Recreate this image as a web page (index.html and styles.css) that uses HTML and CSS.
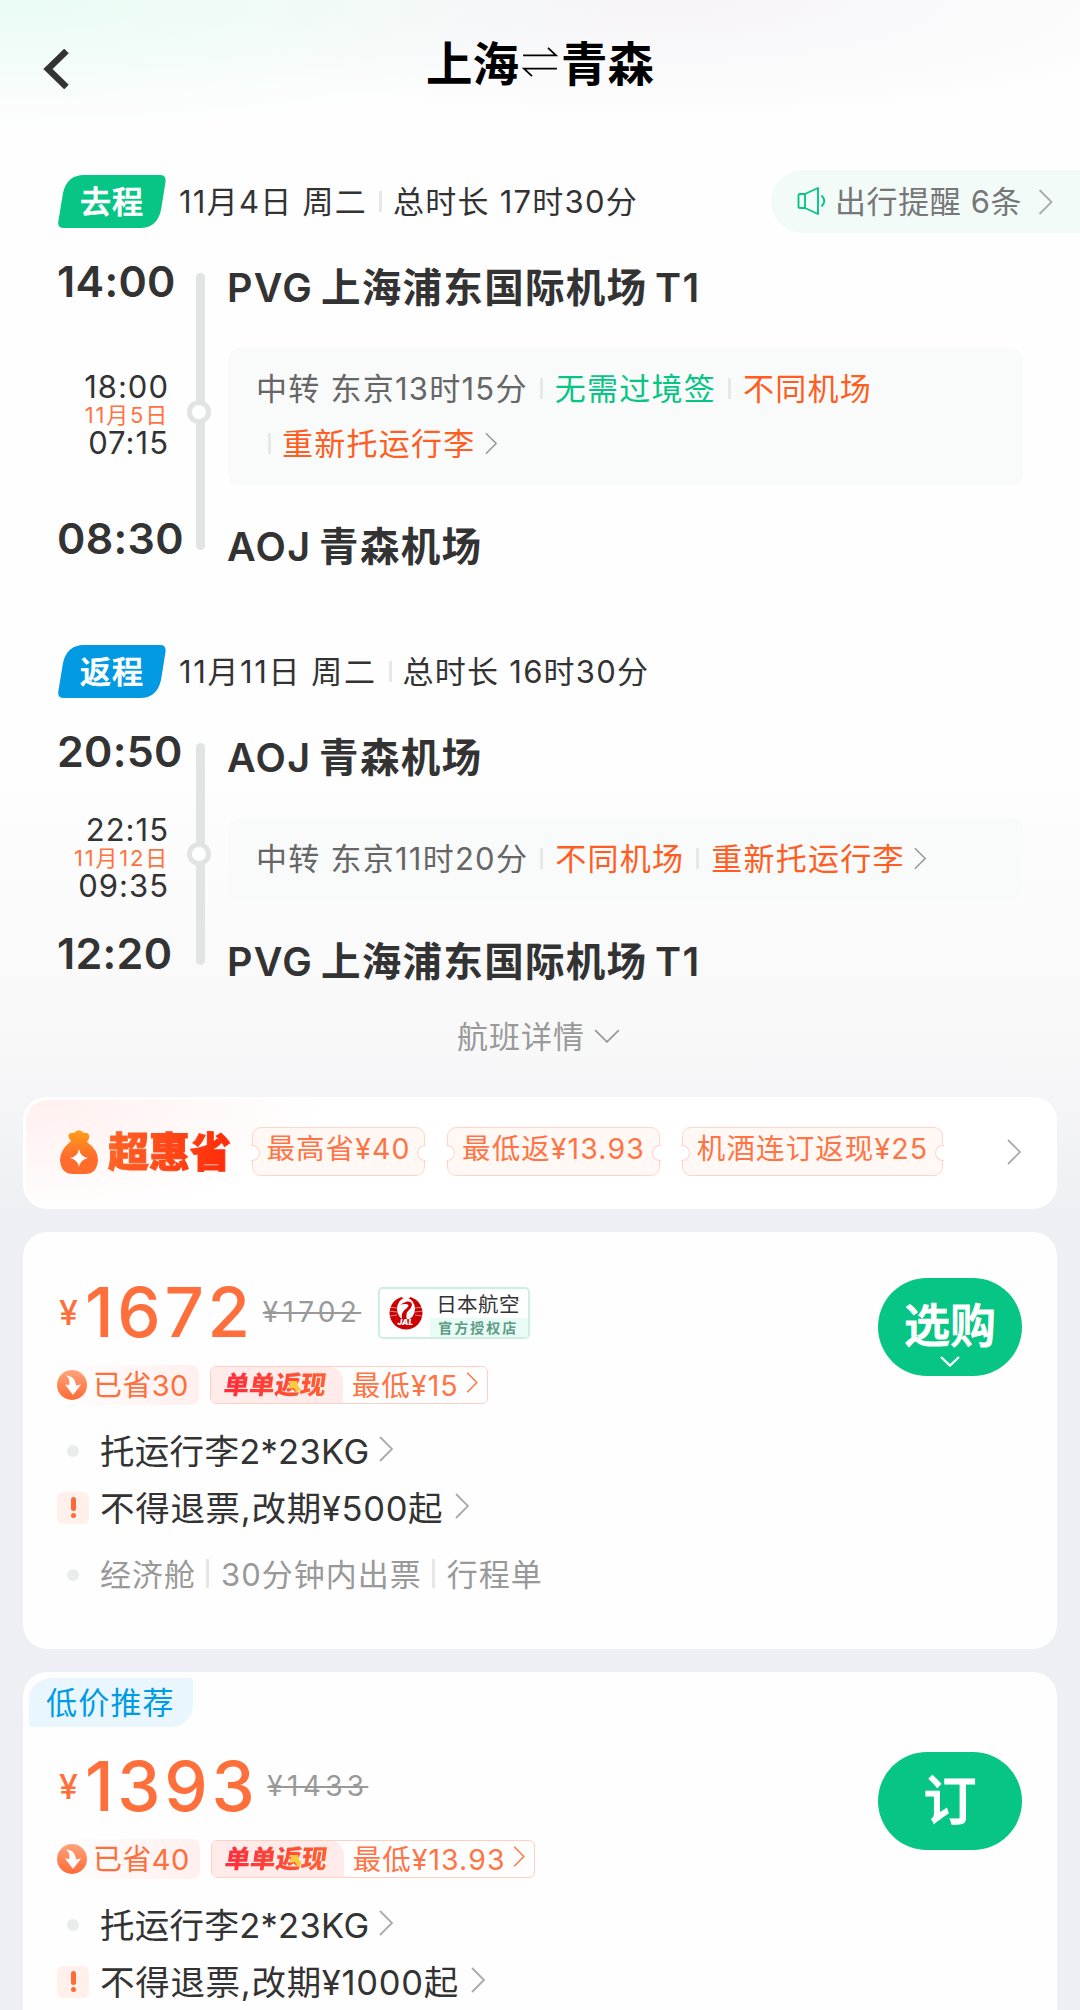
FILE: index.html
```
<!DOCTYPE html>
<html lang="zh-CN">
<head>
  <meta charset="UTF-8" />
  <title>上海⇌青森</title>
  <link rel="stylesheet" href="styles.css">
</head>
<body>
  <!-- ícones reutilizados -->
  <svg class="sprite" width="0" height="0">
    <defs>
      <linearGradient id="bag-fill" x1="0" y1="0" x2="0" y2="1">
        <stop offset="0" stop-color="#ff9f17" />
        <stop offset="0.6" stop-color="#ff6c2c" />
        <stop offset="1" stop-color="#ff6c2c" />
      </linearGradient>
      <linearGradient id="save-fill" x1="0" y1="0" x2="0" y2="1">
        <stop offset="0" stop-color="#ffa47c" />
        <stop offset="1" stop-color="#ff6a35" />
      </linearGradient>
    </defs>
    <symbol id="chevron" viewBox="0 0 14 26">
      <path d="M1 1 L13 13 L1 25" fill="none" stroke="currentColor" stroke-width="1.8" />
    </symbol>
    <symbol id="save" viewBox="0 0 30 30">
      <circle cx="15" cy="15" r="15" fill="url(#save-fill)" />
      <path d="M9 5.5 C13 9 12.500 11 12.200 15 L8 14.5 L16 25 L24 14.5 L19 15.500 C18.500 9 14.5 5.5 9 5.5 Z" fill="#fff" />
    </symbol>
  </svg>

  <header class="topbar">
    <svg class="back" viewBox="0 0 26 40"><path d="M23.5 2 L5 20 L23.5 38" fill="none" stroke="#333" stroke-width="6.5" /></svg>
    <h1 class="title">上海<svg class="swap" viewBox="0 0 40 36"><path d="M1 10.500 H38 L29 2 M39 25.500 H2 L11 34" fill="none" stroke="#000" stroke-width="2" /></svg>青森</h1>
  </header>

  <section class="leg">
    <div class="leg-head">
      <span class="leg-tag"><svg viewBox="0 0 108 53"><path d="M26 0 H102 Q108.500 0 107.500 7 L103 35 Q99 53 82 53 H6 Q-1 53 .4 46 L5 18 Q9 0 26 0 Z" fill="#07c585" /></svg><b>去程</b></span>
      <span class="leg-date">11月4日 周二</span>
      <i class="sep"></i>
      <span class="leg-total">总时长 17时30分</span>
      <a class="notice">
        <svg class="horn" viewBox="0 0 28 28"><path d="M7.500 7 V21 M1 8.500 Q1 7 2.500 7 H7.500 L20.500 1 V27 L7.500 21 H2.500 Q1 21 1 19.500 Z M24 8.500 Q29.500 14 24 19.500" fill="none" stroke="#07c585" stroke-width="1.900" stroke-linejoin="round" /></svg>
        <span>出行提醒 6条</span>
        <svg class="chev"><use href="#chevron" /></svg>
      </a>
    </div>
    <div class="route route-tall">
      <div class="axis"></div>
      <div class="stop"></div>
      <div class="time">14:00</div>
      <div class="airport">PVG 上海浦东国际机场 T1</div>
      <div class="mid-time"><span>18:00</span><em>11月5日</em><span>07:15</span></div>
      <div class="transit">
        <div class="transit-line">
          <span>中转 东京13时15分</span><i class="sep"></i>
          <span class="green">无需过境签</span><i class="sep"></i>
          <span class="orange">不同机场</span>
        </div>
        <div class="transit-line second">
          <i class="sep"></i><span class="orange">重新托运行李</span>
          <svg class="chev small"><use href="#chevron" /></svg>
        </div>
      </div>
      <div class="time last">08:30</div>
      <div class="airport last">AOJ 青森机场</div>
    </div>
  </section>

  <section class="leg leg-back">
    <div class="leg-head">
      <span class="leg-tag"><svg viewBox="0 0 108 53"><path d="M26 0 H102 Q108.500 0 107.500 7 L103 35 Q99 53 82 53 H6 Q-1 53 .4 46 L5 18 Q9 0 26 0 Z" fill="#019ae3" /></svg><b>返程</b></span>
      <span class="leg-date">11月11日 周二</span>
      <i class="sep"></i>
      <span class="leg-total">总时长 16时30分</span>
    </div>
    <div class="route route-short">
      <div class="axis"></div>
      <div class="stop"></div>
      <div class="time">20:50</div>
      <div class="airport">AOJ 青森机场</div>
      <div class="mid-time"><span>22:15</span><em>11月12日</em><span>09:35</span></div>
      <div class="transit">
        <div class="transit-line">
          <span>中转 东京11时20分</span><i class="sep"></i>
          <span class="orange">不同机场</span><i class="sep"></i>
          <span class="orange">重新托运行李</span>
          <svg class="chev small"><use href="#chevron" /></svg>
        </div>
      </div>
      <div class="time last">12:20</div>
      <div class="airport last">PVG 上海浦东国际机场 T1</div>
    </div>
  </section>

  <div class="details"><span>航班详情</span><svg viewBox="0 0 24 13"><path d="M1 1 L12 12 L23 1" fill="none" stroke="#999" stroke-width="1.600" /></svg></div>

  <section class="promo">
    <svg class="bag" viewBox="0 0 38 44">
      <path d="M11 11 Q7 7 9 4 Q11 2 14 3 Q19 -2.500 24 3 Q28 2 29 5 Q30 8 27 12 Q38 20 38 30 Q37 44 25 44 H13 Q1 44 0 30 Q0 20 11 11 Z" fill="url(#bag-fill)" />
      <path d="M19 19 Q20.500 27 28 28 Q20.500 29.500 19 37 Q17.500 29.500 10 28 Q17.500 27 19 19 Z" fill="#fff" />
    </svg>
    <b class="promo-name">超惠省</b>
    <span class="coupon c1">最高省¥40</span>
    <span class="coupon c2">最低返¥13.93</span>
    <span class="coupon c3">机酒连订返现¥25</span>
    <svg class="chev"><use href="#chevron" /></svg>
  </section>

  <section class="fare">
    <div class="fare-main">
      <div class="price-row">
        <span class="yen">¥</span><span class="price">1672</span><s class="old">¥1702</s>
        <div class="store">
          <svg class="jal" viewBox="0 0 34 34">
            <circle cx="17" cy="17" r="16.500" fill="#cb0000" />
            <ellipse cx="17" cy="13" rx="9" ry="11" fill="#fff" />
            <path d="M12 0 H22 L20 2.500 H14 Z" fill="#fff" />
            <path d="M11 8.500 L18 5.500 Q23 5 23 9 Q22.500 12 19.500 14.500 Q16 18 18 23 L23 25 H11 L13 22 Q12 17 15.500 14 Q20 10.500 19.500 9 Q18.500 7.500 11 8.500 Z" fill="#cb0000" />
            <path d="M0 11 L8 12 M0 15 L8 16 M1 20 L8 19 M34 11 L26 12 M34 15 L26 16 M33 20 L26 19" stroke="#fff" stroke-width=".5" />
            <text x="8.500" y="29" class="jal-text">JAL</text>
          </svg>
          <div class="store-text"><span>日本航空</span><small>官方授权店</small></div>
        </div>
      </div>
      <div class="tag-row">
        <span class="saved"><svg><use href="#save" /></svg><span>已省30</span></span>
        <span class="cashback"><b><i>单单返现</i><svg viewBox="0 0 12 12"><path d="M1 0 L8 0 L9 5 L12 8 L8 12 L5 7 L0 8 Z" fill="#ffc93c" /></svg></b><span>最低¥15</span><svg class="chev"><use href="#chevron" /></svg></span>
      </div>
      <ul class="rules">
        <li class="bag-rule"><i class="dot"></i><span>托运行李2*23KG</span><svg class="chev"><use href="#chevron" /></svg></li>
        <li><i class="warn"></i><span>不得退票,改期¥500起</span><svg class="chev"><use href="#chevron" /></svg></li>
        <li class="muted"><i class="dot"></i><span>经济舱</span><i class="sep"></i><span>30分钟内出票</span><i class="sep"></i><span>行程单</span></li>
      </ul>
    </div>
    <button class="buy">选购<svg viewBox="0 0 20 11"><path d="M1 1 L10 9.500 L19 1" fill="none" stroke="#fff" stroke-width="2.300" /></svg></button>
  </section>

  <section class="fare fare-low">
    <span class="ribbon">低价推荐</span>
    <div class="fare-main">
      <div class="price-row">
        <span class="yen">¥</span><span class="price">1393</span><s class="old">¥1433</s>
      </div>
      <div class="tag-row">
        <span class="saved"><svg><use href="#save" /></svg><span>已省40</span></span>
        <span class="cashback"><b><i>单单返现</i><svg viewBox="0 0 12 12"><path d="M1 0 L8 0 L9 5 L12 8 L8 12 L5 7 L0 8 Z" fill="#ffc93c" /></svg></b><span>最低¥13.93</span><svg class="chev"><use href="#chevron" /></svg></span>
      </div>
      <ul class="rules">
        <li class="bag-rule"><i class="dot"></i><span>托运行李2*23KG</span><svg class="chev"><use href="#chevron" /></svg></li>
        <li><i class="warn"></i><span>不得退票,改期¥1000起</span><svg class="chev"><use href="#chevron" /></svg></li>
      </ul>
    </div>
    <button class="buy single">订</button>
  </section>
</body>
</html>
```
FILE: styles.css
```
* {
  box-sizing: border-box;
}

body {
  margin: 0;
  width: 1080px;
  height: 2010px;
  overflow: hidden;
  font-family: Inter, "Noto Sans CJK SC", sans-serif;
  font-size: 31px;
  color: #333;
  white-space: nowrap;
  background:
    radial-gradient(ellipse 620px 130px at 0 0, #e9fbf4, rgba(255, 255, 255, 0)),
    radial-gradient(ellipse 560px 120px at 660px 0, #f6f4f7, rgba(255, 255, 255, 0)),
    linear-gradient(#fefefe 760px, #f8f8f9 1050px, #eeeff4 1220px);
}

i, em {
  font-style: normal;
}

svg {
  flex: none;
  display: block;
}

.sprite {
  position: absolute;
}

.chev {
  width: 14px;
  height: 26px;
  color: #aaa;
}

.chev.small {
  width: 12px;
  height: 23px;
  color: #999;
}

.sep {
  width: 3px;
  height: 21px;
  background: #e6e8e7;
  flex: none;
}

/* topo */
.topbar {
  height: 175px;
  display: grid;
  grid-template-columns: 43px 26px 1fr 69px;
  align-items: start;
}

.back {
  grid-column: 2;
  width: 26px;
  height: 40px;
  margin-top: 49px;
}

.title {
  margin: 27px 0 0;
  height: 66px;
  display: flex;
  justify-content: center;
  align-items: center;
  font-size: 46.500px;
  font-weight: 600;
  color: #000;
}

.swap {
  width: 40px;
  height: 32px;
  margin: 4px 1px 0;
}

/* trechos */
.leg-head {
  height: 53px;
  padding-left: 58px;
  display: flex;
  align-items: center;
}

.leg-back {
  margin-top: 60px;
}

.leg-tag {
  width: 108px;
  height: 53px;
  display: grid;
  place-items: center;
  margin-right: 13px;
}

.leg-tag svg, .leg-tag b {
  grid-area: 1 / 1;
}

.leg-tag svg {
  width: 108px;
  height: 53px;
}

.leg-tag b {
  padding-bottom: 4px;
  color: #fff;
  font-size: 31px;
  font-weight: 500;
  letter-spacing: 1px;
  -webkit-text-stroke: .7px #fff;
}

.leg-head > .sep {
  margin: 0 11px 0 12px;
}

.leg-date, .leg-total {
  padding-bottom: 4px;
  letter-spacing: 1.250px;
}

.leg-back .leg-date {
  letter-spacing: 1.600px;
}

.notice {
  margin-left: auto;
  width: 309px;
  height: 63px;
  padding: 0 27px 0 26px;
  border-radius: 32px 0 0 32px;
  background: #f3fbf9;
  display: flex;
  align-items: center;
  color: #777;
}

.notice span {
  padding-bottom: 4px;
  letter-spacing: .6px;
}

.notice .chev {
  margin-left: auto;
  width: 15px;
}

.horn {
  width: 29px;
  height: 28px;
  margin: 0 9px 2px 0;
}

.route {
  margin-top: 22px;
  display: grid;
  grid-template-columns: 58px 109px 20px 24px 17px 795px;
}

.route-tall {
  grid-template-rows: 98px 138px 99px;
}

.route-short {
  grid-template-rows: 98px 83px 99px;
}

.axis {
  grid-area: 1 / 4 / 4 / 5;
  width: 9px;
  margin: 23px 0 35px 9px;
  border-radius: 5px;
  background: #e2e4e3;
}

.stop {
  grid-area: 2 / 4;
  align-self: center;
  width: 24px;
  height: 24px;
  margin-bottom: 11px;
  border: 5px solid #e2e4e3;
  border-radius: 50%;
  background: #fff;
}

.time {
  grid-area: 1 / 2;
  margin-left: -1px;
  font-size: 43px;
  font-weight: 600;
  line-height: 63px;
  letter-spacing: .3px;
}

.time.last {
  grid-area: 3 / 2;
  align-self: end;
  margin-bottom: 15px;
}

.airport {
  grid-area: 1 / 6;
  margin-left: -1px;
  font-size: 39.500px;
  font-weight: 600;
  line-height: 77px;
  letter-spacing: 1.300px;
  word-spacing: -3.500px;
}

.airport.last {
  grid-area: 3 / 6;
  align-self: end;
  line-height: 75px;
}

.mid-time {
  grid-area: 2 / 2;
  align-self: center;
  margin: 0 -2px 5px 0;
  text-align: right;
  display: flex;
  flex-direction: column;
  letter-spacing: 1px;
}

.mid-time span {
  line-height: 29px;
}

.mid-time em {
  padding-top: 2px;
  font-size: 22px;
  line-height: 25px;
  letter-spacing: 1.800px;
  color: #ff7340;
}

.transit {
  grid-area: 2 / 6;
  padding: 13px 28px;
  border-radius: 12px;
  background: #f9fafa;
  color: #666;
}

.transit-line {
  height: 55px;
  display: flex;
  align-items: center;
}

.transit-line span {
  padding-bottom: 4px;
  letter-spacing: 1.250px;
}

.transit-line .sep {
  margin: 0 12px;
}

.second .sep {
  margin: 0 11px 0 12px;
}

.transit-line .chev {
  margin-left: 9px;
}

.green {
  color: #07c585;
}

.orange {
  color: #ff5d22;
}

.details {
  height: 72px;
  padding-left: 457px;
  display: flex;
  align-items: center;
  letter-spacing: 1px;
  color: #999;
}

.details span {
  padding-bottom: 3px;
}

.details svg {
  width: 26px;
  height: 14px;
  margin-left: 9px;
}

/* promoções */
.promo {
  margin: 25px 23px 0;
  height: 112px;
  padding: 0 0 3px 34px;
  border: 3px solid #fff;
  border-radius: 24px;
  background: radial-gradient(ellipse 300px 120px at 0 0, #fff0ee, #fff) padding-box, #fff;
  display: flex;
  align-items: center;
}

.bag {
  width: 38px;
  height: 44px;
}

.promo-name {
  margin: 0 21px 0 10px;
  font-size: 41px;
  font-weight: 900;
  line-height: 50px;
  background: linear-gradient(90deg, #ff6426, #ff2a08);
  background-clip: text;
  color: transparent;
  -webkit-text-stroke: 1px transparent;
}

/* cupom com recortes laterais */
.coupon {
  position: relative;
  height: 49px;
  margin-right: 22px;
  border: 1.500px solid #ffd5ca;
  border-radius: 9px;
  background: #fff8f5;
  font-size: 28.500px;
  line-height: 41px;
  letter-spacing: 1.100px;
  text-align: center;
  color: #ff7445;
}

.coupon::before, .coupon::after {
  content: "";
  position: absolute;
  top: 17px;
  width: 8px;
  height: 14px;
  border: 1.500px solid #ffd5ca;
  background: #fff;
}

.coupon::before {
  left: -2px;
  border-left: 0;
  border-radius: 0 8px 8px 0;
}

.coupon::after {
  right: -2px;
  border-right: 0;
  border-radius: 8px 0 0 8px;
}

.c1 { width: 173px; }
.c2 { width: 213px; }
.c3 { width: 261px; }

.promo .chev {
  margin: 0 33px 0 auto;
}

/* tarifas */
.fare {
  margin: 23px 23px 0;
  height: 417px;
  padding: 46px 35px 0 34px;
  border-radius: 24px;
  background: #fefefe;
  display: flex;
  justify-content: space-between;
  align-items: flex-start;
}

.price-row {
  height: 68px;
  padding-left: 2px;
  display: flex;
  align-items: center;
}

.yen {
  font-size: 34px;
  font-weight: 500;
  color: #ff6f3b;
}

.price {
  margin-left: 7px;
  font-size: 69px;
  font-weight: 500;
  line-height: 68px;
  letter-spacing: 3.700px;
  color: #ff6f3b;
}

.old {
  margin-left: 9px;
  font-size: 28px;
  letter-spacing: 4.300px;
  color: #999;
}

.store {
  width: 152px;
  height: 52px;
  margin: 2px 0 0 17px;
  padding-left: 9px;
  border: 2px solid #cdeee3;
  border-radius: 5px;
  background: #fff;
  display: flex;
  align-items: center;
}

.jal {
  width: 34px;
  height: 34px;
}

.jal-text {
  font: italic 900 8px Inter, sans-serif;
  fill: #fff;
}

.store-text {
  margin-left: 7px;
  flex: 1;
  height: 48px;
  display: flex;
  flex-direction: column;
}

.store-text span {
  padding-left: 6px;
  height: 29px;
  font-size: 20.500px;
  line-height: 31px;
  letter-spacing: .4px;
  color: #333;
}

.store-text small {
  padding-left: 8px;
  height: 19px;
  font-size: 14px;
  font-weight: 600;
  line-height: 19px;
  letter-spacing: 2px;
  color: #5f9b88;
  background: #e8fcf5;
}

.tag-row {
  height: 40px;
  margin-top: 18.500px;
  display: flex;
  align-items: center;
}

.saved {
  height: 40px;
  padding-right: 10px;
  border-radius: 8px;
  background: linear-gradient(90deg, rgba(255, 240, 238, 0), #fff0ee);
  display: flex;
  align-items: center;
  font-size: 29px;
  letter-spacing: .4px;
  color: #ff6f3b;
}

.saved span {
  padding-bottom: 4px;
}

.saved svg {
  width: 30px;
  height: 30px;
  margin-right: 6px;
}

.cashback {
  height: 38px;
  margin-left: 11px;
  padding-right: 9px;
  border: 1.500px solid #ffcfc1;
  border-radius: 6px;
  display: flex;
  align-items: center;
  font-size: 28.500px;
  color: #ff7445;
}

.cashback b {
  position: relative;
  width: 132px;
  height: 100%;
  padding-left: 13px;
  border-radius: 4px 14px 0 4px;
  background: #ffebea;
  display: flex;
  align-items: center;
}

.cashback b i {
  font-size: 25.500px;
  font-weight: 900;
  line-height: 34px;
  transform: skewX(-8deg);
  background: linear-gradient(90deg, #ff2b3c, #ff6030);
  background-clip: text;
  color: transparent;
}

.cashback b svg {
  position: absolute;
  left: 78px;
  top: 14px;
  width: 12px;
  height: 12px;
}

.cashback > span {
  margin-left: 9px;
  padding-bottom: 3px;
  letter-spacing: 1.050px;
}

.cashback .chev {
  width: 12px;
  height: 21px;
  margin: 0 0 4px 7px;
  color: #ff7445;
}

.rules {
  margin: 22px 0 0;
  padding: 0;
  list-style: none;
}

.rules li {
  height: 48px;
  margin-bottom: 9px;
  display: flex;
  align-items: center;
  font-size: 34.500px;
  letter-spacing: .7px;
}

.rules li span {
  padding-bottom: 4px;
}

.rules .bag-rule {
  letter-spacing: .3px;
}

.rules .chev {
  margin: 0 0 3px 12px;
}

.rules .bag-rule .chev {
  margin-left: 10px;
}

.dot {
  width: 12px;
  height: 12px;
  margin: 0 21px 0 10px;
  border-radius: 50%;
  background: #eaecec;
}

.warn {
  width: 32px;
  height: 32px;
  margin-right: 11px;
  border-radius: 6px;
  background: #fff0ec;
  display: flex;
  flex-direction: column;
  align-items: center;
  justify-content: center;
  gap: 2px;
}

.warn::before, .warn::after {
  content: "";
  width: 5px;
  height: 14px;
  border-radius: 3px;
  background: #ff6a35;
}

.warn::after {
  height: 5px;
}

.rules .muted {
  margin-top: 19px;
  font-size: 31px;
  letter-spacing: 1px;
  color: #999;
}

.muted .sep {
  height: 29px;
  margin: 0 12px 3px 10px;
}

.buy {
  width: 144px;
  height: 98px;
  padding: 11px 0 0;
  border: none;
  border-radius: 49px;
  background: #07c585;
  color: #fff;
  font-family: inherit;
  font-size: 46px;
  font-weight: 500;
  line-height: 72px;
  -webkit-text-stroke: 1px #fff;
  display: flex;
  flex-direction: column;
  align-items: center;
}

.buy svg {
  width: 20px;
  height: 11px;
  margin-top: -5px;
}

.buy.single {
  padding: 0;
  font-size: 53px;
  line-height: 98px;
}

/* segunda tarifa, com faixa no canto */
.fare-low {
  position: relative;
  height: 338px;
  padding-top: 80px;
  border-radius: 24px 24px 0 0;
}

.ribbon {
  position: absolute;
  left: 6px;
  top: 6px;
  width: 164px;
  height: 49px;
  padding-left: 17px;
  border-radius: 22px 3px 22px 3px;
  background: #eaf6fe;
  color: #009be5;
  line-height: 49px;
  letter-spacing: 1.200px;
}
```
